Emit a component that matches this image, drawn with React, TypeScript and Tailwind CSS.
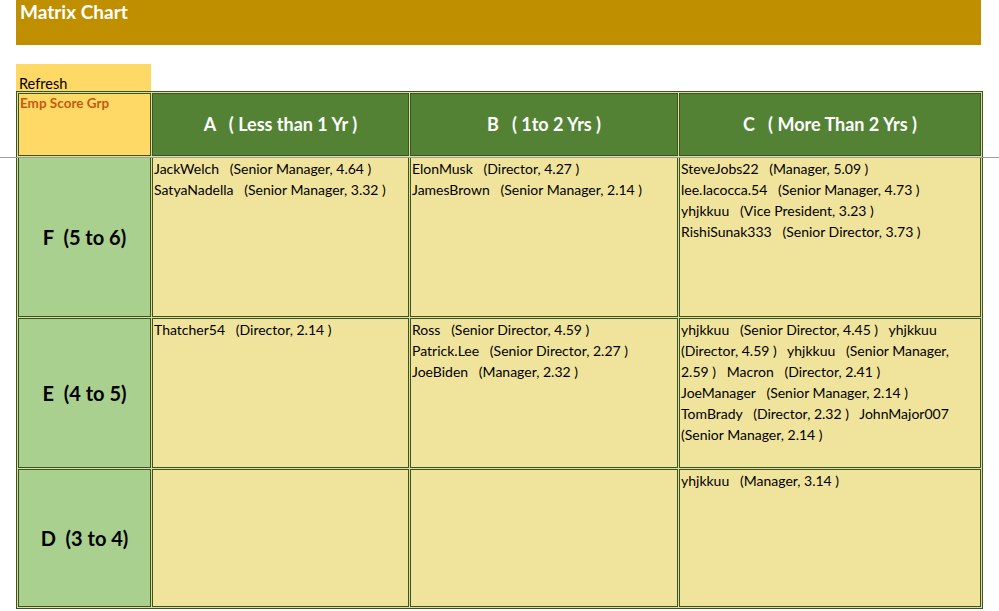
const cols = [
  { key: "A", label: "A\u00a0\u00a0\u00a0( Less than 1 Yr )", w: 258 },
  { key: "B", label: "B\u00a0\u00a0\u00a0( 1to 2 Yrs )", w: 269 },
  { key: "C", label: "C\u00a0\u00a0\u00a0( More Than 2 Yrs )", w: 303 },
];

type Emp = [string, string, string];

const rows: { label: string; h: number; cells: Emp[][] }[] = [
  {
    label: "F\u00a0\u00a0(5 to 6)",
    h: 161,
    cells: [
      [
        ["JackWelch", "Senior Manager", "4.64"],
        ["SatyaNadella", "Senior Manager", "3.32"],
      ],
      [
        ["ElonMusk", "Director", "4.27"],
        ["JamesBrown", "Senior Manager", "2.14"],
      ],
      [
        ["SteveJobs22", "Manager", "5.09"],
        ["lee.Iacocca.54", "Senior Manager", "4.73"],
        ["yhjkkuu", "Vice President", "3.23"],
        ["RishiSunak333", "Senior Director", "3.73"],
      ],
    ],
  },
  {
    label: "E\u00a0\u00a0(4 to 5)",
    h: 151,
    cells: [
      [["Thatcher54", "Director", "2.14"]],
      [
        ["Ross", "Senior Director", "4.59"],
        ["Patrick.Lee", "Senior Director", "2.27"],
        ["JoeBiden", "Manager", "2.32"],
      ],
      [],
    ],
  },
  { label: "D\u00a0\u00a0(3 to 4)", h: 139, cells: [[], [], [["yhjkkuu", "Manager", "3.14"]]] },
];

const sp = "\u00a0\u00a0\u00a0";

function empText(e: Emp) {
  return `${e[0]}${sp}(${e[1]}, ${e[2]} )`;
}

// the wrapped cell in row E / column C
const mixedLines = [
  `yhjkkuu${sp}(Senior Director, 4.45 )${sp}yhjkkuu`,
  `(Director, 4.59 )${sp}yhjkkuu${sp}(Senior Manager,`,
  `2.59 )${sp}Macron${sp}(Director, 2.41 )`,
  `JoeManager${sp}(Senior Manager, 2.14 )`,
  `TomBrady${sp}(Director, 2.32 )${sp}JohnMajor007`,
  `(Senior Manager, 2.14 )`,
];

export default function App() {
  return (
    <div className="relative w-[999px] h-[611px] bg-white overflow-hidden" style={{ fontFamily: "Lato, 'Open Sans', sans-serif" }}>
      <div className="ml-4 w-[965px] h-[45px] bg-[#bf8f00] pl-1">
        <span className="text-white font-bold text-[19px] leading-[24px]">Matrix Chart</span>
      </div>
      <div className="ml-4 mt-[19px] w-[135px] h-[28px] bg-[#ffd966] flex items-end pl-[3px]">
        <span className="text-[14.5px] leading-[17px] text-black">Refresh</span>
      </div>
      <table
        className="ml-4 -mt-px border border-[#375623] bg-[#e2dc9a] table-fixed"
        style={{ borderCollapse: "separate", borderSpacing: "1px" }}
      >
        <colgroup>
          <col className="w-[133px]" />
          {cols.map((c) => (
            <col key={c.key} style={{ width: c.w - 1 }} />
          ))}
        </colgroup>
        <tbody>
          <tr className="h-[63px]">
            <td className="border border-[#375623] bg-[#ffd966] align-top px-[1px] text-[13.5px] font-bold text-[#c65911] leading-[18px]">
              Emp Score Grp
            </td>
            {cols.map((c) => (
              <td
                key={c.key}
                className="border border-[#375623] bg-[#548235] text-center text-white font-bold text-[18px]"
              >
                {c.label}
              </td>
            ))}
          </tr>
          {rows.map((r) => (
            <tr key={r.label} style={{ height: r.h - 1 }}>
              <td className="border border-[#375623] bg-[#a9d08e] text-center font-bold text-[20px] text-black">
                {r.label}
              </td>
              {r.cells.map((cell, i) => (
                <td
                  key={i}
                  className="border border-[#375623] bg-[#f0e49c] align-top px-[1px] text-[14px] leading-[21px] text-black"
                >
                  {r.label.startsWith("E") && i === 2
                    ? mixedLines.map((l, j) => (
                        <div key={j} className="whitespace-nowrap">
                          {l}
                        </div>
                      ))
                    : cell.map((e, j) => (
                        <div key={j} className="whitespace-nowrap">
                          {empText(e)}
                        </div>
                      ))}
                </td>
              ))}
            </tr>
          ))}
        </tbody>
      </table>
      <div className="absolute left-0 top-[157px] w-full h-px bg-[#9e9e9e] pointer-events-none" />
    </div>
  );
}
